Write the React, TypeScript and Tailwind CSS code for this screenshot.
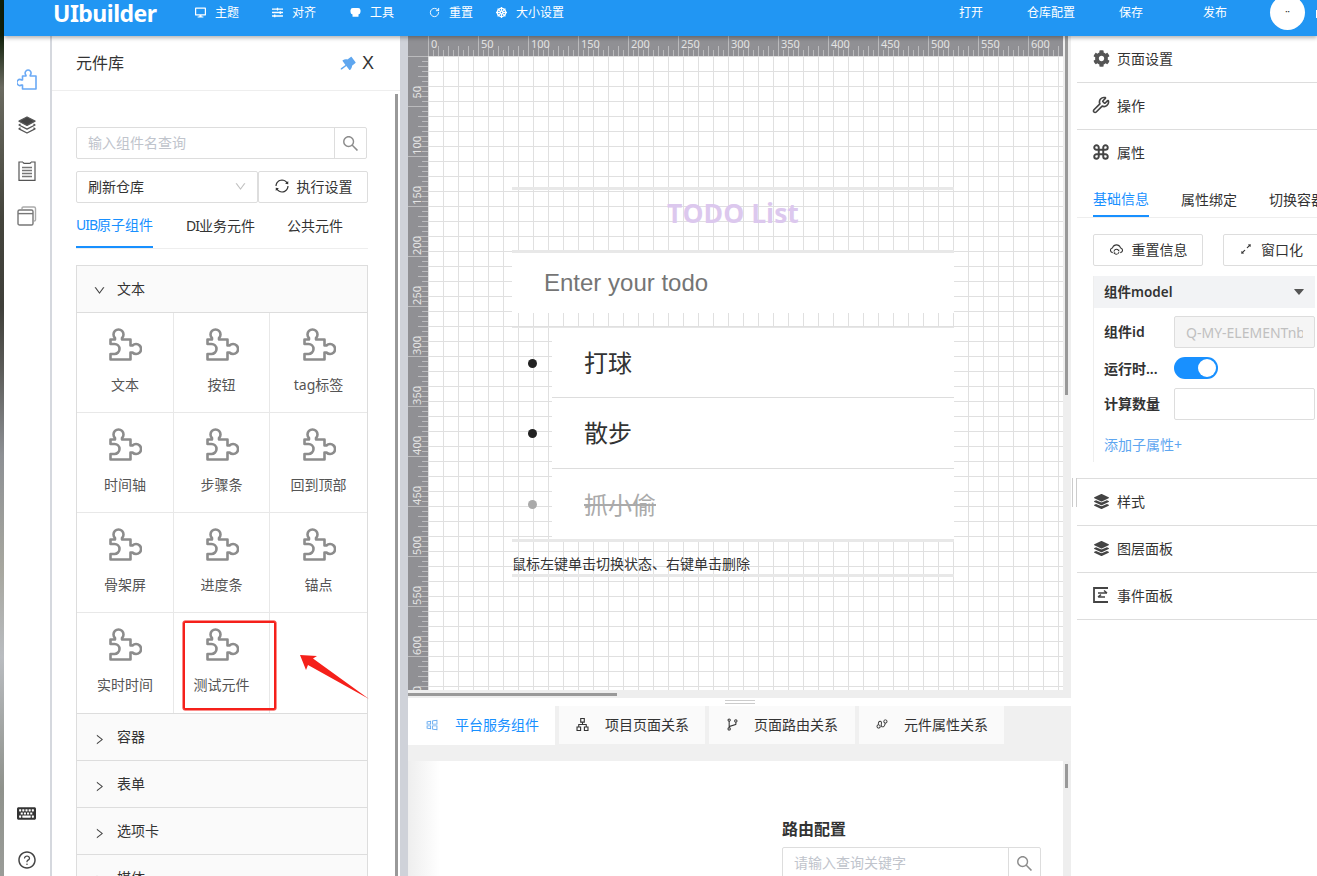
import React from 'react';
import { RotateCw, Wrench, Command } from 'lucide-react';
import { FaDesktop, FaSlidersH, FaDharmachakra, FaLayerGroup, FaKeyboard, FaCog } from 'react-icons/fa';
import {
  AiFillPushpin,
  AiOutlineSearch,
  AiOutlineDown,
  AiOutlineRight,
  AiOutlineSync,
  AiOutlineQuestionCircle,
  AiOutlineCloudSync,
  AiOutlineArrowsAlt,
  AiOutlineWindows,
  AiOutlineApartment,
  AiOutlineBranches,
  AiOutlineNodeIndex,
  AiFillCaretDown,
} from 'react-icons/ai';

const fontStack = { fontFamily: '"Noto Sans", "Noto Sans CJK SC", sans-serif' };

function ToolIcon({ size }: { size: number }) {
  return (
    <svg width={size} height={size} viewBox="0 0 11 11" fill="white">
      <rect x="0.5" y="1" width="10" height="6.5" rx="2.4" />
      <rect x="2.5" y="7" width="6" height="2.8" rx="0.6" />
    </svg>
  );
}

const navLeft = [
  { icon: FaDesktop, label: '主题', cls: 'ml-[29px]', size: 11 },
  { icon: FaSlidersH, label: '对齐', cls: 'ml-[33px]', size: 11 },
  { icon: ToolIcon, label: '工具', cls: 'ml-[34px]', size: 11 },
  { icon: RotateCw, label: '重置', cls: 'ml-[35px]', size: 11 },
  { icon: FaDharmachakra, label: '大小设置', cls: 'ml-[23px]', size: 11 },
];

const navRight = [
  { label: '打开', cls: 'w-[68px]' },
  { label: '仓库配置', cls: 'w-[92px]' },
  { label: '保存', cls: 'w-[84px]' },
  { label: '发布', cls: 'w-[67px]' },
];

const widgets = ['文本', '按钮', 'tag标签', '时间轴', '步骤条', '回到顶部', '骨架屏', '进度条', '锚点', '实时时间', '测试元件'];

function PuzzleIcon() {
  return (
    <svg width="34" height="34" viewBox="0 0 34 34" fill="none" stroke="#8c8c8c" strokeWidth="2.6" strokeLinejoin="round">
      <path d="M2.5 11.5 H7 V10 A5 5 0 1 1 14 10 V11.5 H22.5 V17.5 H24.5 A5 5 0 1 1 24.5 24.5 H22.5 V31.5 H2.5 V26 H6.5 A5 5 0 0 0 6.5 16 H2.5 Z" />
    </svg>
  );
}

function RailPuzzle() {
  return (
    <svg width="20" height="21" viewBox="1 0 20 21" fill="none" stroke="#6aa9f5" strokeWidth="1.6" strokeLinejoin="round">
      <path d="M6.5 7 H10 V6.2 A3 3 0 1 1 14.2 6.2 V7 H20 V20 H6.5 V16 H5.6 A3 3 0 1 1 5.6 11 H6.5 Z" />
    </svg>
  );
}

function RailLayers() {
  return (
    <svg width="18" height="18" viewBox="0 0 18 18" fill="none" stroke="#555" strokeWidth="1.3" strokeLinejoin="round">
      <path d="M9 1 L17 5.2 L9 9.4 L1 5.2 Z" fill="#444" />
      <path d="M2.5 8 L1 9 L9 13.2 L17 9 L15.5 8" />
      <path d="M2.5 11.8 L1 12.8 L9 17 L17 12.8 L15.5 11.8" />
    </svg>
  );
}

function RailClipboard() {
  return (
    <svg width="18" height="20" viewBox="0 0 18 20" fill="none" stroke="#555" strokeWidth="1.2">
      <path d="M5 1 H1 V19.4 H17 V1 H13 M5 1 Q5 2.4 6.5 2.4 H11.5 Q13 2.4 13 1" />
      <path d="M4 6.5 H14 M4 9.5 H14 M4 12.5 H14 M4 15.5 H14" stroke="#777" strokeWidth="1.3" />
    </svg>
  );
}

function RailCopy() {
  return (
    <svg width="20" height="20" viewBox="0 0 20 20" fill="none" stroke="#777" strokeWidth="1.4">
      <path d="M5 3 V2.4 Q5 1 6.4 1 H17 Q18.5 1 18.5 2.4 V14 Q18.5 15 17 15" stroke="#aaa" />
      <rect x="1" y="4" width="15" height="15" rx="1.6" />
      <path d="M1 7.6 H16" />
    </svg>
  );
}

function EventIcon() {
  return (
    <svg width="16" height="16" viewBox="0 0 16 16" fill="none" stroke="#444" strokeWidth="1.8">
      <path d="M15 1 H1 V15 H15" />
      <path d="M5 6 H14 M11 3.5 L14 6 M12 10 H5 M8 7.6 L5 10" strokeWidth="1.5" />
    </svg>
  );
}

function TopRuler() {
  const marks = Array.from({ length: 14 }, (_, i) => i * 50);
  const ticks = Array.from({ length: 131 }, (_, i) => i * 5);
  return (
    <div className="relative h-[20px] flex-1 overflow-hidden bg-[#909094]">
      <svg className="absolute left-0 top-0" width="640" height="20">
        {ticks.map((x) => (
          <line
            key={x}
            x1={x + 0.5}
            x2={x + 0.5}
            y1={x % 50 === 0 ? 0 : x % 10 === 0 ? 10 : 14}
            y2={20}
            stroke="#bbbbbd"
            strokeWidth="1"
          />
        ))}
      </svg>
      <div className="absolute left-0 top-0 flex text-[11px] leading-[16px] text-[#e4e4e4]">
        {marks.map((m) => (
          <span key={m} className="w-[50px] pl-[3px]">
            {m}
          </span>
        ))}
      </div>
    </div>
  );
}

function LeftRuler() {
  const marks = Array.from({ length: 13 }, (_, i) => (i + 1) * 50);
  const ticks = Array.from({ length: 131 }, (_, i) => i * 5);
  return (
    <div className="relative h-full w-[20px] overflow-hidden bg-[#909094]">
      <svg className="absolute left-0 top-0" width="20" height="640">
        {ticks.map((y) => (
          <line
            key={y}
            y1={y + 0.5}
            y2={y + 0.5}
            x1={y % 50 === 0 ? 0 : y % 10 === 0 ? 10 : 14}
            x2={20}
            stroke="#bbbbbd"
            strokeWidth="1"
          />
        ))}
      </svg>
      {marks.map((m, i) => (
        <div key={m} className="h-0">
          <span
            className="absolute left-[2px] block w-[14px] rotate-180 text-center text-[11px] leading-[14px] text-[#e4e4e4] [writing-mode:vertical-rl]"
            style={{ top: (i + 1) * 50 - 20 }}
          >
            {m}
          </span>
        </div>
      ))}
    </div>
  );
}

function TodoCanvas() {
  return (
    <div className="h-full flex-1 overflow-hidden bg-white bg-[linear-gradient(#e0e0e0_1px,transparent_1px),linear-gradient(90deg,#e0e0e0_1px,transparent_1px)] bg-[size:15px_15px]">
      <div className="ml-[84px] mt-[131px] w-[442px]">
        <div className="flex h-[66px] items-center justify-center border-y-[3px] border-[#e8e8e8] pb-[13px]">
          <h1 className="text-[26.5px] font-bold text-[#dcc8ee]" style={{ fontFamily: '"Open Sans", sans-serif' }}>
            TODO List
          </h1>
        </div>
        <div
          className="flex h-[60px] items-center bg-white pl-[32px] text-[24px] text-[#757575]"
          style={{ fontFamily: '"Liberation Sans", sans-serif' }}
        >
          Enter your todo
        </div>
        <div className="mt-[14px] border-t border-[#e6e6e6]">
          <div className="flex h-[70px]">
            <div className="flex w-[40px] items-center pl-[16px]">
              <span className="h-[9px] w-[9px] rounded-full bg-[#222222]" />
            </div>
            <div className="flex flex-1 items-center border-b border-[#dddddd] bg-white pl-[32px] text-[24px] text-[#333333]">打球</div>
          </div>
          <div className="flex h-[71px]">
            <div className="flex w-[40px] items-center pl-[16px]">
              <span className="h-[9px] w-[9px] rounded-full bg-[#222222]" />
            </div>
            <div className="flex flex-1 items-center border-b border-[#dddddd] bg-white pl-[32px] text-[24px] text-[#333333]">散步</div>
          </div>
          <div className="flex h-[70px]">
            <div className="flex w-[40px] items-center pl-[16px]">
              <span className="h-[9px] w-[9px] rounded-full bg-[#aaaaaa]" />
            </div>
            <div className="flex flex-1 items-center bg-white pl-[32px] pt-[2px] text-[24px] text-[#aaaaaa] line-through">抓小偷</div>
          </div>
        </div>
        <div className="flex h-[38px] items-center border-y-[3px] border-[#e8e8e8] pt-[10px] text-[14px] text-[#333333]">
          鼠标左键单击切换状态、右键单击删除
        </div>
      </div>
    </div>
  );
}

function SideTitle({ icon, label }: { icon: React.ReactNode; label: string }) {
  return (
    <div className="flex h-[47px] items-center gap-[8px] border-b border-[#dddddd] pb-[2px] pl-[16px] text-[14px] text-[#333333]">
      <span className="flex w-[16px] justify-center">{icon}</span>
      {label}
    </div>
  );
}

export default function App() {
  return (
    <div className="flex h-[876px] w-[1317px] overflow-hidden bg-white" style={fontStack}>
      {/* photo strip showing behind the window */}
      <div className="w-[4px] shrink-0 bg-[linear-gradient(#10200a,#10200a_4%,#6a6a60_10%,#44443c_25%,#3f3f3a_35%,#5b5b58_42%,#8d9094_52%,#a7a79f_65%,#b9bcc0_75%,#8f928c_90%,#9a9c98)]" />

      <div className="flex min-w-0 flex-1 flex-col">
        {/* Header */}
        <header className="relative z-10 flex h-[36px] shrink-0 bg-[#2196f3] text-white shadow-[0_2px_4px_rgba(0,0,0,0.3)]">
          <div className="ml-[49px] w-[113px] text-[23px] font-bold leading-[26px] tracking-[-0.5px]">UIbuilder</div>
          {navLeft.map((item) => {
            const Icon = item.icon;
            return (
              <div key={item.label} className={`flex h-[25px] items-center gap-[9px] text-[12px] ${item.cls}`}>
                <span className="flex w-[11px] justify-center">
                  <Icon size={item.size} />
                </span>
                {item.label}
              </div>
            );
          })}
          <div className="ml-auto flex h-[25px] items-center text-[12px]">
            {navRight.map((item) => (
              <div key={item.label} className={item.cls}>
                {item.label}
              </div>
            ))}
          </div>
          <div className="mr-[12px] mt-[-5px] flex h-[35px] w-[35px] items-center justify-center rounded-full bg-white text-[6px] text-[#333333]">
            ••
          </div>
          <div className="absolute right-0 top-[10px] h-[8px] w-[1px] bg-white" />
        </header>

        <div className="flex min-h-0 flex-1">
          {/* Icon rail */}
          <div className="flex w-[48px] shrink-0 flex-col items-center border-r-2 border-[#d5d8de] pr-[1px]">
            <div className="mt-[33px]">
              <RailPuzzle />
            </div>
            <div className="mt-[26px]">
              <RailLayers />
            </div>
            <div className="mt-[27px]">
              <RailClipboard />
            </div>
            <div className="mt-[25px]">
              <RailCopy />
            </div>
            <div className="mt-auto">
              <FaKeyboard size={19} color="#333333" />
            </div>
            <div className="mb-[6px] mt-[27px]">
              <AiOutlineQuestionCircle size={20} color="#444444" />
            </div>
          </div>

          {/* Widget library */}
          <aside className="relative w-[348px] shrink-0 overflow-hidden">
            <div className="flex h-[55px] items-center border-b border-[#eeeeee] pl-[24px] text-[16px] text-[#333333]">
              元件库
              <AiFillPushpin size={19} color="#5ea6ef" className="ml-[215px] rotate-[8deg]" />
              <span className="ml-[4px] text-[18px]" style={{ fontFamily: '"Liberation Sans", sans-serif' }}>
                X
              </span>
            </div>

            <div className="ml-[24px] w-[292px]">
              <div className="mt-[36px] flex h-[32px] w-[291px] rounded-[2px] border border-[#dddddd]">
                <div className="flex flex-1 items-center pb-[2px] pl-[11px] text-[14px] text-[#c0c4cc]">输入组件名查询</div>
                <div className="flex w-[32px] items-center justify-center border-l border-[#dddddd]">
                  <AiOutlineSearch size={19} color="#8c8c8c" />
                </div>
              </div>

              <div className="mt-[12px] flex h-[32px] text-[14px] text-[#333333]">
                <div className="flex w-[182px] items-center justify-between rounded-[2px] border border-[#dddddd] pb-[2px] pl-[11px] pr-[10px]">
                  刷新仓库
                  <AiOutlineDown size={13} color="#c0c0c0" />
                </div>
                <div className="flex w-[110px] items-center justify-center gap-[7px] rounded-[2px] border border-[#dddddd] pb-[2px]">
                  <AiOutlineSync size={16} color="#333333" />
                  执行设置
                </div>
              </div>

              <div className="flex h-[46px] border-b border-[#eeeeee] text-[14px] text-[#333333]">
                <div className="flex w-[77px] items-center justify-center whitespace-nowrap border-b-2 border-[#1890ff] text-[#1890ff]">
                  <span className="tracking-[-1px]">UIB</span>原子组件
                </div>
                <div className="ml-[33px] flex items-center whitespace-nowrap">
                  <span className="tracking-[-1px]">DI</span>业务元件
                </div>
                <div className="ml-[32px] flex items-center">公共元件</div>
              </div>

              {/* Accordion */}
              <div className="mt-[16px] border border-b-0 border-[#dddddd] text-[14px] text-[#333333]">
                <div className="flex h-[47px] items-center border-b border-[#dddddd] bg-[#fafafa] pl-[16px]">
                  <AiOutlineDown size={13} color="#444444" className="mt-[3px]" />
                  <span className="mb-[2px] ml-[11px]">文本</span>
                </div>
                <div className="grid grid-cols-[97px_96px_97px] border-b border-[#dddddd]">
                  {widgets.map((name, i) => (
                    <div
                      key={name}
                      className={`relative flex h-[100px] flex-col items-center border-[#e8e8e8] pt-[15px] ${
                        i < 9 ? 'border-b' : ''
                      } ${i === 2 || i === 5 || i === 8 ? '' : 'border-r'}`}
                    >
                      <PuzzleIcon />
                      <span className="mt-[12px] text-[#555555]">{name}</span>
                      {name === '测试元件' && (
                        <div className="absolute left-[9px] top-[8px] h-[89px] w-[93px] rounded-[2px] border-2 border-[#f5201a] shadow-[0_0_0_0.5px_#f5201a]" />
                      )}
                    </div>
                  ))}
                </div>
                {['容器', '表单', '选项卡', '媒体'].map((name) => (
                  <div key={name} className="flex h-[47px] items-center border-b border-[#dddddd] bg-[#fafafa] pl-[16px]">
                    <AiOutlineRight size={13} color="#444444" className="mt-[5px]" />
                    <span className="mb-[2px] ml-[11px]">{name}</span>
                  </div>
                ))}
              </div>
            </div>

            {/* Annotation arrow */}
            <svg className="absolute left-[248px] top-[619px]" width="70" height="46">
              <polygon points="0,0 17,1 13,3.5 69,44 8,10 6,15" fill="#f5201a" />
            </svg>
            {/* Panel scrollbar */}
            <div className="absolute bottom-0 left-[343px] top-[58px] w-[3px] bg-[#999999]" />
          </aside>

          {/* Center */}
          <main className="flex w-[671px] shrink-0 flex-col bg-[linear-gradient(90deg,#cfd2d9_8px,transparent_8px)] pl-[8px]">
            <div className="flex h-[654px] shrink-0">
              <div className="flex min-w-0 flex-1 flex-col">
                <div className="flex shrink-0 bg-[#909094]">
                  <div className="h-[20px] w-[20px] shrink-0" />
                  <TopRuler />
                </div>
                <div className="flex min-h-0 flex-1">
                  <LeftRuler />
                  <TodoCanvas />
                </div>
              </div>
              <div className="relative w-[8px] shrink-0 bg-[#eeeeee]">
                <div className="absolute left-[2px] top-0 h-[359px] w-[3px] bg-[#999999]" />
              </div>
            </div>

            {/* Horizontal scroll gutter + splitter */}
            <div className="h-[8px] shrink-0 bg-[#eeeeee] pt-[3px]">
              <div className="h-[3px] w-[209px] bg-[#999999]" />
            </div>
            <div className="flex h-[8px] shrink-0 flex-col items-center justify-center gap-[2px]">
              <div className="h-px w-[30px] bg-[#cccccc]" />
              <div className="h-px w-[30px] bg-[#cccccc]" />
            </div>

            {/* Bottom tabs */}
            <div className="flex h-[55px] shrink-0 items-start gap-[4px] bg-[#f0f0f0] text-[14px] text-[#333333]">
              <div className="flex h-[39px] w-[147px] items-center bg-white pb-[2px] pl-[17px] text-[#1890ff]">
                <AiOutlineWindows size={14} color="#5ea6ef" className="shrink-0" />
                <span className="ml-[16px] whitespace-nowrap">平台服务组件</span>
              </div>
              <div className="flex h-[38px] w-[146px] items-center bg-[#fafafa] pb-[2px] pl-[16px]">
                <AiOutlineApartment size={15} className="shrink-0" />
                <span className="ml-[15px] whitespace-nowrap">项目页面关系</span>
              </div>
              <div className="flex h-[38px] w-[146px] items-center bg-[#fafafa] pb-[2px] pl-[16px]">
                <AiOutlineBranches size={15} className="shrink-0" />
                <span className="ml-[14px] whitespace-nowrap">页面路由关系</span>
              </div>
              <div className="flex h-[38px] w-[145px] items-center bg-[#fafafa] pb-[2px] pl-[16px]">
                <AiOutlineNodeIndex size={14} className="shrink-0 rotate-90" />
                <span className="ml-[15px] whitespace-nowrap">元件属性关系</span>
              </div>
            </div>

            <div className="relative flex-1 overflow-hidden bg-white bg-[linear-gradient(90deg,#eeeeee,transparent_32px)]">
              <div className="ml-[374px] mt-[58px] text-[16px] font-semibold leading-[20px] text-[#333333]">路由配置</div>
              <div className="ml-[374px] mt-[8px] flex h-[32px] w-[259px] rounded-[2px] border border-[#dddddd]">
                <div className="flex flex-1 items-center pb-[2px] pl-[11px] text-[14px] text-[#c0c4cc]">请输入查询关键字</div>
                <div className="flex w-[32px] items-center justify-center border-l border-[#dddddd]">
                  <AiOutlineSearch size={19} color="#8c8c8c" />
                </div>
              </div>
              <div className="absolute bottom-0 right-0 top-0 w-[8px] bg-[#eeeeee]" />
              <div className="absolute left-[657px] top-[3px] h-[24px] w-[3px] bg-[#999999]" />
            </div>
          </main>

          {/* Right settings panel */}
          <aside className="relative min-w-0 flex-1 overflow-hidden pl-[6px]">
            <SideTitle icon={<FaCog size={17} color="#555555" className="shrink-0" />} label="页面设置" />
            <SideTitle icon={<Wrench size={18} color="#444444" strokeWidth={2.2} className="shrink-0" />} label="操作" />
            <div className="flex h-[46px] items-center gap-[8px] pb-[2px] pl-[16px] text-[14px] text-[#333333]">
              <span className="flex w-[16px] justify-center">
                <Command size={18} color="#444444" strokeWidth={2.6} className="shrink-0" />
              </span>
              属性
            </div>

            <div className="flex h-[42px] w-[300px] border-b border-[#eeeeee] pl-[16px] text-[14px] text-[#333333]">
              <div className="flex w-[56px] items-center justify-center whitespace-nowrap border-b-2 border-[#1890ff] pt-[6px] text-[#1890ff]">
                基础信息
              </div>
              <div className="ml-[32px] flex items-center whitespace-nowrap pt-[6px]">属性绑定</div>
              <div className="ml-[32px] flex items-center whitespace-nowrap pt-[6px]">切换容器</div>
            </div>

            <div className="ml-[16px] mt-[16px] flex h-[32px] w-[300px] gap-[20px] text-[14px] text-[#333333]">
              <div className="flex w-[110px] items-center justify-center gap-[8px] rounded-[2px] border border-[#dddddd] pb-[2px]">
                <AiOutlineCloudSync size={15} />
                重置信息
              </div>
              <div className="flex w-[96px] shrink-0 items-center justify-center gap-[8px] whitespace-nowrap rounded-[2px] border border-[#dddddd] pb-[2px]">
                <AiOutlineArrowsAlt size={14} />
                窗口化
              </div>
            </div>

            <div className="ml-[16px] mt-[10px] w-[222px] border-l border-[#eeeeee]">
              <div className="flex h-[32px] items-center justify-between bg-[#f2f3f5] pl-[10px] pr-[9px] text-[13.5px] font-semibold text-[#333333]">
                组件model
                <AiFillCaretDown size={14} color="#555555" />
              </div>
              <div className="pl-[10px] pt-[8px] text-[14px] font-semibold text-[#333333]">
                <div className="flex h-[32px] items-center">
                  <span className="mb-[2px] w-[70px]">组件id</span>
                  <div className="flex h-[32px] w-[141px] items-center overflow-hidden whitespace-nowrap rounded-[2px] border border-[#dddddd] bg-[#f5f5f5] pl-[11px] pr-[11px] text-[14px] font-normal text-[#c0c0c0]">
                    <span className="block w-full overflow-hidden">Q-MY-ELEMENTnb.</span>
                  </div>
                </div>
                <div className="mt-[10px] flex h-[20px] items-center">
                  <span className="w-[70px]">运行时...</span>
                  <div className="flex h-[22px] w-[44px] items-center justify-end rounded-full bg-[#1890ff] pr-[2px]">
                    <span className="h-[18px] w-[18px] rounded-full bg-white" />
                  </div>
                </div>
                <div className="mt-[10px] flex h-[32px] items-center">
                  <span className="mb-[2px] w-[70px]">计算数量</span>
                  <div className="h-[32px] w-[141px] rounded-[2px] border border-[#dddddd]" />
                </div>
                <div className="mt-[15px] pb-[7px] text-[14px] font-normal leading-[20px] text-[#5ea6f0]">添加子属性+</div>
              </div>
            </div>

            <div className="mt-[16px] border-t border-[#dddddd]">
              <SideTitle icon={<FaLayerGroup size={15} color="#444444" />} label="样式" />
              <SideTitle icon={<FaLayerGroup size={15} color="#444444" />} label="图层面板" />
              <SideTitle icon={<EventIcon />} label="事件面板" />
            </div>
            {/* Drag handle */}
            <div className="absolute left-[1px] top-[442px] h-[29px] w-[5px] border-x border-[#cccccc]" />
          </aside>
        </div>
      </div>
    </div>
  );
}
